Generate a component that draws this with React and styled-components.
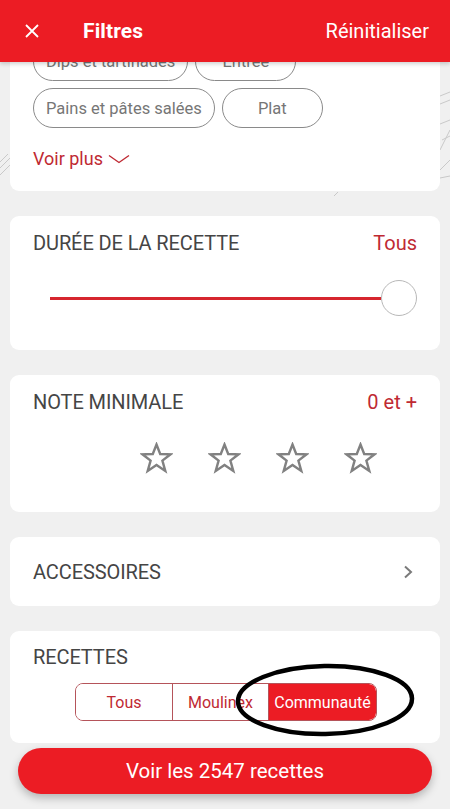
import React from "react";
import styled, { createGlobalStyle } from "styled-components";

const RED = "#ec1c24";
const DARK_RED = "#bf2a33";

const Global = createGlobalStyle`
  html, body { margin: 0; padding: 0; }
  body { font-family: Roboto, "Noto Sans", Arial, sans-serif; background: #f0f0f0; }
  * { box-sizing: border-box; }
`;

const Screen = styled.div`
  position: relative;
  width: 450px;
  height: 809px;
  overflow: hidden;
  background: #f0f0f0;
`;

const Decor = styled.svg`
  position: absolute;
  inset: 0;
  width: 450px;
  height: 809px;
  pointer-events: none;
`;

const Header = styled.header`
  position: absolute;
  top: 0;
  left: 0;
  right: 0;
  z-index: 3;
  height: 62px;
  background: ${RED};
  display: flex;
  align-items: center;
  padding: 0 21px 0 25px;
  box-shadow: 0 2px 4px rgba(0, 0, 0, 0.18);
  color: #fff;
`;

const CloseBtn = styled.button`
  border: 0;
  background: none;
  padding: 0;
  width: 14px;
  height: 14px;
  display: flex;
  margin-right: 44px;
`;

const Title = styled.h1`
  margin: 0;
  font-size: 21px;
  font-weight: 700;
  flex: 1;
  letter-spacing: 0.1px;
`;

const Reset = styled.span`
  font-size: 20px;
  font-weight: 400;
`;

const Content = styled.main`
  position: relative;
  z-index: 1;
  display: flex;
  flex-direction: column;
  gap: 25px;
  padding: 20px 10px 0;
`;

const Card = styled.section`
  background: #fff;
  border-radius: 9px;
  padding: ${(p) => p.$pad || "0 23px"};
  height: ${(p) => p.$h}px;
  display: flex;
  flex-direction: column;
`;

const ChipRows = styled.div`
  display: flex;
  flex-direction: column;
  gap: 7px;
  padding-top: 22px;
`;

const ChipRow = styled.div`
  display: flex;
  gap: 7px;
`;

const Chip = styled.span`
  height: ${(p) => p.$h || 40}px;
  min-width: 101px;
  padding: 0 12px;
  border: 1.3px solid #8a8a8a;
  border-radius: 20px;
  display: inline-flex;
  align-items: center;
  justify-content: center;
  color: #767676;
  font-size: 16.5px;
  font-weight: 400;
  white-space: nowrap;
`;

const MoreLink = styled.div`
  display: flex;
  align-items: center;
  gap: 5px;
  margin-top: 20px;
  color: ${DARK_RED};
  font-size: 18px;
`;

const SectionHead = styled.div`
  display: flex;
  align-items: center;
  justify-content: space-between;
  height: ${(p) => p.$h || 24}px;
  margin-top: ${(p) => p.$top || 0}px;
`;

const SectionTitle = styled.h2`
  margin: 0;
  font-size: 20px;
  font-weight: 400;
  color: #454545;
  letter-spacing: -0.1px;
`;

const Value = styled.span`
  font-size: 20px;
  color: ${DARK_RED};
`;

const SliderWrap = styled.div`
  height: 38px;
  margin: 24px 0 0 17px;
  display: flex;
  align-items: center;
`;

const Track = styled.div`
  flex: 1;
  height: 3px;
  background: #d6262e;
`;

const Thumb = styled.div`
  width: 36px;
  height: 36px;
  border-radius: 50%;
  border: 1px solid #b8b8b8;
  background: #fff;
  flex: none;
`;

const Stars = styled.div`
  display: flex;
  gap: 35px;
  margin: 28px 0 0 107px;
`;

const Chevron = styled.svg`
  display: block;
`;

const Segmented = styled.div`
  display: flex;
  align-self: flex-start;
  margin: 14px 0 0 42px;
  height: 38px;
  border: 1px solid #b5545a;
  border-radius: 8px;
  overflow: hidden;
`;

const Segment = styled.div`
  width: ${(p) => p.$w}px;
  display: flex;
  align-items: center;
  justify-content: center;
  font-size: 16px;
  color: ${(p) => (p.$active ? "#fff" : DARK_RED)};
  background: ${(p) => (p.$active ? RED : "#fff")};
  border-left: ${(p) => (p.$first ? "none" : "1px solid #b5545a")};
  border-radius: ${(p) => (p.$active ? "0 7px 7px 0" : "0")};
`;

const Annotation = styled.svg`
  position: absolute;
  left: 235px;
  top: 663px;
  z-index: 2;
  pointer-events: none;
`;

const CTA = styled.button`
  position: absolute;
  left: 18px;
  right: 18px;
  bottom: 15px;
  z-index: 3;
  height: 46px;
  border: 0;
  border-radius: 23px;
  background: ${RED};
  color: #fff;
  font-family: Roboto, "Noto Sans", Arial, sans-serif;
  font-size: 20.5px;
  box-shadow: 0 4px 8px rgba(0, 0, 0, 0.25);
`;

const StarIcon = () => (
  <svg width="33" height="32" viewBox="0 0 33 32">
    <path
      d="M16.5 2.5 L20.2 12 L30.5 12.3 L22.4 18.6 L25.3 29 L16.5 23 L7.7 29 L10.6 18.6 L2.5 12.3 L12.8 12 Z"
      fill="none"
      stroke="#818181"
      strokeWidth="2.4"
      strokeLinejoin="miter"
    />
  </svg>
);

export default function App() {
  return (
    <Screen>
      <Global />
      <Decor viewBox="0 0 450 809">
        <g stroke="#c9c9c9" strokeWidth="1" fill="none">
          <path d="M0 168 L10 158 M0 175 L10 165 M0 162 L8 154" />
          <path d="M440 96 L450 92 M440 104 L450 100 M440 124 L450 120 M442 140 L450 136 M440 150 L450 130 M440 170 L450 160 M440 178 L450 176" />
          <path d="M334 196 L338 192" />
        </g>
      </Decor>

      <Header>
        <CloseBtn aria-label="Fermer">
          <svg width="14" height="14" viewBox="0 0 14 14">
            <path d="M1 1 L13 13 M13 1 L1 13" stroke="#fff" strokeWidth="1.8" />
          </svg>
        </CloseBtn>
        <Title>Filtres</Title>
        <Reset>Réinitialiser</Reset>
      </Header>

      <Content>
        <Card $h={171}>
          <ChipRows>
            <ChipRow>
              <Chip $h={39}>Dips et tartinades</Chip>
              <Chip $h={39}>Entrée</Chip>
            </ChipRow>
            <ChipRow>
              <Chip>Pains et pâtes salées</Chip>
              <Chip>Plat</Chip>
            </ChipRow>
          </ChipRows>
          <MoreLink>
            Voir plus
            <Chevron width="22" height="10" viewBox="0 0 22 10">
              <path d="M1 1.5 L11 8.5 L21 1.5" fill="none" stroke={DARK_RED} strokeWidth="1.4" />
            </Chevron>
          </MoreLink>
        </Card>

        <Card $h={134}>
          <SectionHead $top={15}>
            <SectionTitle>DURÉE DE LA RECETTE</SectionTitle>
            <Value>Tous</Value>
          </SectionHead>
          <SliderWrap>
            <Track />
            <Thumb />
          </SliderWrap>
        </Card>

        <Card $h={137}>
          <SectionHead $top={15}>
            <SectionTitle>NOTE MINIMALE</SectionTitle>
            <Value>0 et +</Value>
          </SectionHead>
          <Stars>
            <StarIcon />
            <StarIcon />
            <StarIcon />
            <StarIcon />
          </Stars>
        </Card>

        <Card $h={69} $pad="0 27px 0 23px">
          <SectionHead $h={69}>
            <SectionTitle>ACCESSOIRES</SectionTitle>
            <Chevron width="10" height="14" viewBox="0 0 10 14">
              <path d="M2 1.5 L8 7 L2 12.5" fill="none" stroke="#7a7a7a" strokeWidth="2" />
            </Chevron>
          </SectionHead>
        </Card>

        <Card $h={112}>
          <SectionHead $top={14}>
            <SectionTitle>RECETTES</SectionTitle>
          </SectionHead>
          <Segmented>
            <Segment $w={96} $first>Tous</Segment>
            <Segment $w={96}>Moulinex</Segment>
            <Segment $w={108} $active>Communauté</Segment>
          </Segmented>
        </Card>
      </Content>

      <Annotation width="182" height="76" viewBox="0 0 182 76">
        <ellipse cx="90" cy="37" rx="87" ry="34" fill="none" stroke="#000" strokeWidth="4.5" transform="rotate(-1 90 37)" />
      </Annotation>

      <CTA>Voir les 2547 recettes</CTA>
    </Screen>
  );
}
